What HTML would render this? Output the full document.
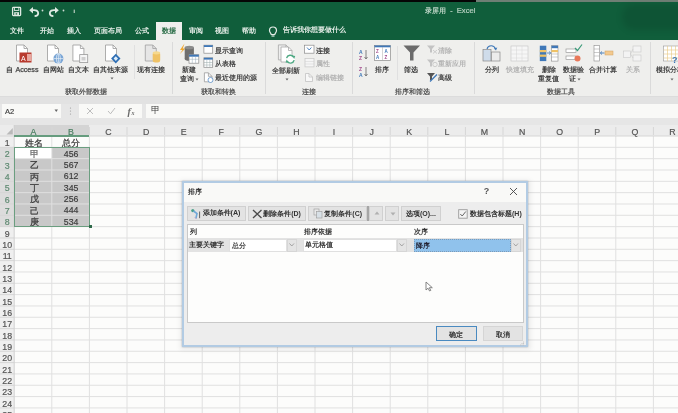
<!DOCTYPE html><html><head><meta charset="utf-8"><style>
*{margin:0;padding:0;box-sizing:border-box}
html,body{width:678px;height:413px;overflow:hidden;background:#fcfcfb;font-family:"Liberation Sans",sans-serif;color:#333;position:relative}
.a{position:absolute}
.t{position:absolute;white-space:nowrap;line-height:1;font-weight:bold}
svg{position:absolute;overflow:visible}
</style></head><body><div id="root" style="position:absolute;left:0;top:0;width:678px;height:413px;will-change:transform"><div class="a" style="left:0px;top:0px;width:475.5px;height:1.5px;background:#050505"></div>
<div class="a" style="left:475.5px;top:0px;width:202.5px;height:1.5px;background:#6f7f75"></div>
<div class="a" style="left:0px;top:2px;width:678px;height:38px;background:#105e3b"></div>
<div class="a" style="left:622px;top:4px;width:70px;height:26px;background:rgba(0,0,0,0.10);border-radius:12px;filter:blur(3px)"></div>
<div class="a" style="left:0px;top:1.5px;width:678px;height:38.5px;background:transparent"></div>
<svg style="left:11px;top:6px" width="11" height="11" viewBox="0 0 11 11"><rect x="1.6" y="1.4" width="8" height="8.2" rx="0.8" fill="none" stroke="#dfeae3" stroke-width="1.3"/><rect x="3.4" y="1.4" width="4.4" height="3" fill="none" stroke="#dfeae3" stroke-width="0.9"/><rect x="3.2" y="6.2" width="4.8" height="3.4" fill="#dfeae3"/><rect x="4.6" y="7.2" width="1.6" height="1.4" fill="#2b6e48"/></svg>
<svg style="left:28px;top:6px" width="12" height="11" viewBox="0 0 12 11"><path d="M1.2 4.2 L5 1 L5 7.4 Z" fill="#dfeae3"/><path d="M4.5 4.2 C8 3.6 10.2 5 10.2 7.2 C10.2 9 8.8 10 6.6 10.2" fill="none" stroke="#dfeae3" stroke-width="1.8"/></svg>
<svg style="left:41px;top:9px" width="3" height="3" viewBox="0 0 3 3"><circle cx="1.5" cy="1.5" r="0.9" fill="#cfdcd4"/></svg>
<svg style="left:48px;top:6px" width="12" height="11" viewBox="0 0 12 11"><path d="M10.8 4.2 L7 1 L7 7.4 Z" fill="#dfeae3"/><path d="M7.5 4.2 C4 3.6 1.8 5 1.8 7.2 C1.8 9 3.2 10 5.4 10.2" fill="none" stroke="#dfeae3" stroke-width="1.8"/></svg>
<svg style="left:62px;top:9px" width="3" height="3" viewBox="0 0 3 3"><circle cx="1.5" cy="1.5" r="0.9" fill="#cfdcd4"/></svg>
<svg style="left:73px;top:9px" width="3" height="5" viewBox="0 0 3 5"><rect x="0.6" y="0.6" width="1.4" height="3.4" fill="#9fbcab"/></svg>
<div class="t" style="left:425px;top:6.8px;font-size:7px;color:#b9d2c3;font-weight:bold;">录屏用</div>
<div class="t" style="left:450.3px;top:6.8px;font-size:7px;color:#b9d2c3;font-weight:normal;-webkit-text-stroke:0.2px #b9d2c3;">-</div>
<div class="t" style="left:456.8px;top:6.5px;font-size:7.6px;color:#b9d2c3;font-weight:normal;-webkit-text-stroke:0.2px #b9d2c3;">Excel</div>
<div class="t" style="left:9.5px;top:27px;font-size:7px;color:#e3ece6;font-weight:bold;">文件</div>
<div class="t" style="left:40.3px;top:27px;font-size:7px;color:#e3ece6;font-weight:bold;">开始</div>
<div class="t" style="left:66.5px;top:27px;font-size:7px;color:#e3ece6;font-weight:bold;">插入</div>
<div class="t" style="left:94.2px;top:27px;font-size:7px;color:#e3ece6;font-weight:bold;">页面布局</div>
<div class="t" style="left:134.8px;top:27px;font-size:7px;color:#e3ece6;font-weight:bold;">公式</div>
<div class="t" style="left:188.8px;top:27px;font-size:7px;color:#e3ece6;font-weight:bold;">审阅</div>
<div class="t" style="left:215px;top:27px;font-size:7px;color:#e3ece6;font-weight:bold;">视图</div>
<div class="t" style="left:241.6px;top:27px;font-size:7px;color:#e3ece6;font-weight:bold;">帮助</div>
<div class="a" style="left:156px;top:22px;width:26px;height:18px;background:#efefed"></div>
<div class="t" style="left:162px;top:27px;font-size:7px;color:#2b6e48;font-weight:bold;">数据</div>
<svg style="left:268px;top:26px" width="10" height="11" viewBox="0 0 10 11"><path d="M5 1 C2.5 1 1.5 3 1.5 4.5 C1.5 6.5 3 7 3.2 8.5 L6.8 8.5 C7 7 8.5 6.5 8.5 4.5 C8.5 3 7.5 1 5 1 Z" fill="none" stroke="#e3ece6" stroke-width="1.2"/><line x1="3.5" y1="10" x2="6.5" y2="10" stroke="#e3ece6" stroke-width="1.2"/></svg>
<div class="t" style="left:283.4px;top:27px;font-size:7.12px;color:#e3ece6;font-weight:bold;">告诉我你想要做什么</div>
<div class="a" style="left:0px;top:40px;width:678px;height:57px;background:#efefed"></div>
<div class="a" style="left:0px;top:96px;width:678px;height:1px;background:#dcdcdc"></div>
<div class="a" style="left:171.5px;top:42px;width:1px;height:52px;background:#dadada"></div>
<div class="a" style="left:265.3px;top:42px;width:1px;height:52px;background:#dadada"></div>
<div class="a" style="left:351.6px;top:42px;width:1px;height:52px;background:#dadada"></div>
<div class="a" style="left:473.6px;top:42px;width:1px;height:52px;background:#dadada"></div>
<div class="a" style="left:649.6px;top:42px;width:1px;height:52px;background:#dadada"></div>
<div class="a" style="left:133.5px;top:45px;width:1px;height:34px;background:#e0e0e0"></div>
<div class="a" style="left:397px;top:46px;width:1px;height:34px;background:#e0e0e0"></div>
<div class="t" style="left:64.5px;top:88px;font-size:7px;color:#555;font-weight:bold;">获取外部数据</div>
<div class="t" style="left:200.9px;top:88px;font-size:7px;color:#555;font-weight:bold;">获取和转换</div>
<div class="t" style="left:301.5px;top:88px;font-size:7px;color:#555;font-weight:bold;">连接</div>
<div class="t" style="left:395.2px;top:88px;font-size:7px;color:#555;font-weight:bold;">排序和筛选</div>
<div class="t" style="left:547.1px;top:88px;font-size:7px;color:#555;font-weight:bold;">数据工具</div>
<svg style="left:0px;top:40px" width="678" height="57" viewBox="0 0 678 57"><path d="M16.5 5.0 L24 5.0 L27.5 8.5 L27.5 21.0 L16.5 21.0 Z" fill="#ffffff" stroke="#9a9a9a" stroke-width="0.8"/><path d="M24 5.0 L24 8.5 L27.5 8.5" fill="none" stroke="#9a9a9a" stroke-width="0.8"/><rect x="19.5" y="12.5" width="12" height="10" fill="#b83a2e"/><rect x="27" y="14" width="4.5" height="7" fill="#e7a79f"/><text x="21" y="20.5" font-size="7" fill="#fff" font-family="Liberation Sans">A</text><path d="M47.5 5.0 L55 5.0 L58.5 8.5 L58.5 21.0 L47.5 21.0 Z" fill="#ffffff" stroke="#9a9a9a" stroke-width="0.8"/><path d="M55 5.0 L55 8.5 L58.5 8.5" fill="none" stroke="#9a9a9a" stroke-width="0.8"/><circle cx="58.4" cy="18.6" r="5" fill="#7aa6d6"/><path d="M58.4 13.6 V23.6 M53.4 18.6 H63.4" stroke="#e9f0f8" stroke-width="0.7"/><ellipse cx="58.4" cy="18.6" rx="2" ry="5" fill="none" stroke="#e9f0f8" stroke-width="0.7"/><path d="M72.9 5.0 L80.4 5.0 L83.9 8.5 L83.9 21.0 L72.9 21.0 Z" fill="#ffffff" stroke="#9a9a9a" stroke-width="0.8"/><path d="M80.4 5.0 L80.4 8.5 L83.9 8.5" fill="none" stroke="#9a9a9a" stroke-width="0.8"/><rect x="79.7" y="14.6" width="8" height="8" fill="#f6f6f6" stroke="#9a9a9a" stroke-width="0.8"/><rect x="81.5" y="17" width="4" height="3.5" fill="#cfcfcf"/><path d="M105.5 5.0 L113 5.0 L116.5 8.5 L116.5 21.0 L105.5 21.0 Z" fill="#ffffff" stroke="#9a9a9a" stroke-width="0.8"/><path d="M113 5.0 L113 8.5 L116.5 8.5" fill="none" stroke="#9a9a9a" stroke-width="0.8"/><path d="M115.8 13.8 L120.5 18.6 L115.8 23.4 L111.1 18.6 Z" fill="#2f6fb5"/><path d="M115.8 16.3 L118 18.6 L115.8 20.9 L113.6 18.6 Z" fill="#dfeefa"/><path d="M145.3 5.0 L152.8 5.0 L156.3 8.5 L156.3 21.0 L145.3 21.0 Z" fill="#e6e6e6" stroke="#9f9f9f" stroke-width="0.8"/><path d="M152.8 5.0 L152.8 8.5 L156.3 8.5" fill="none" stroke="#9f9f9f" stroke-width="0.8"/><rect x="152.7" y="12" width="7.5" height="10.5" rx="2.5" fill="#efc266"/><ellipse cx="156.45" cy="12.8" rx="3.75" ry="1.6" fill="#f6d98f"/></svg>
<div class="t" style="left:6.4px;top:65.8px;font-size:7.2px;color:#444;font-weight:bold;">自 <span style="font-weight:normal;-webkit-text-stroke:0.25px #444">Access</span></div>
<div class="t" style="left:42.8px;top:65.8px;font-size:7px;color:#444;font-weight:bold;">自网站</div>
<div class="t" style="left:68px;top:65.8px;font-size:7px;color:#444;font-weight:bold;">自文本</div>
<div class="t" style="left:93.2px;top:65.8px;font-size:7px;color:#444;font-weight:bold;">自其他来源</div>
<svg style="left:110px;top:77px" width="4" height="3" viewBox="0 0 4 3"><path d="M0.5 0.5 L3.5 0.5 L2 2.5 Z" fill="#666"/></svg>
<div class="t" style="left:136.8px;top:65.8px;font-size:7px;color:#444;font-weight:bold;">现有连接</div>
<svg style="left:0px;top:40px" width="678" height="57" viewBox="0 0 678 57"><path d="M184.5 3.5 L180 10 L182.5 10 L179.8 14 L185.4 8.5 L182.8 8.5 Z" fill="#f0a830"/><rect x="184.7" y="7.5" width="9.2" height="11.5" fill="#6f6f6f"/><ellipse cx="189.3" cy="7.5" rx="4.6" ry="1.8" fill="#8c8c8c"/><ellipse cx="189.3" cy="19" rx="4.6" ry="1.8" fill="#6f6f6f"/><rect x="189" y="14.7" width="9.8" height="8.5" fill="#fff" stroke="#8a8a8a" stroke-width="0.7"/><rect x="189" y="14.7" width="9.8" height="2" fill="#3f78b8"/><path d="M189 19.3 H198.8 M192.3 16.7 V23.2 M195.6 16.7 V23.2" stroke="#9ab" stroke-width="0.5"/><rect x="203.9" y="5.2" width="8.8" height="8" fill="#fff" stroke="#8a8a8a" stroke-width="0.7"/><rect x="203.9" y="5.2" width="8.8" height="1.8" fill="#3f78b8"/><rect x="203.9" y="17.8" width="8.8" height="9.5" fill="#fff" stroke="#8a8a8a" stroke-width="0.7"/><rect x="203.9" y="17.8" width="8.8" height="1.8" fill="#3f78b8"/><path d="M203.9 22.5 H212.7 M203.9 25 H212.7 M206.8 19.6 V27.3 M209.8 19.6 V27.3" stroke="#9aa" stroke-width="0.5"/><path d="M204.4 32.8 L208.4 32.8 L211.9 36.3 L211.9 41.8 L204.4 41.8 Z" fill="#ffffff" stroke="#9a9a9a" stroke-width="0.8"/><path d="M208.4 32.8 L208.4 36.3 L211.9 36.3" fill="none" stroke="#9a9a9a" stroke-width="0.8"/><circle cx="210.5" cy="40" r="2.5" fill="#fff" stroke="#4a86c5" stroke-width="0.7"/></svg>
<div class="t" style="left:182px;top:65.8px;font-size:7px;color:#444;font-weight:bold;">新建</div>
<div class="t" style="left:180px;top:75px;font-size:7px;color:#444;font-weight:bold;">查询</div>
<svg style="left:195px;top:78px" width="4" height="3" viewBox="0 0 4 3"><path d="M0.5 0.5 L3.5 0.5 L2 2.5 Z" fill="#666"/></svg>
<div class="t" style="left:215px;top:46.5px;font-size:7px;color:#444;font-weight:bold;">显示查询</div>
<div class="t" style="left:215px;top:59.5px;font-size:7px;color:#444;font-weight:bold;">从表格</div>
<div class="t" style="left:215px;top:73.5px;font-size:7px;color:#444;font-weight:bold;">最近使用的源</div>
<svg style="left:0px;top:40px" width="678" height="57" viewBox="0 0 678 57"><path d="M278.4 4.9 L285.9 4.9 L289.4 8.4 L289.4 19.9 L278.4 19.9 Z" fill="#eeeeee" stroke="#a8a8a8" stroke-width="0.8"/><path d="M285.9 4.9 L285.9 8.4 L289.4 8.4" fill="none" stroke="#a8a8a8" stroke-width="0.8"/><path d="M281.0 7.0 L288.5 7.0 L292.0 10.5 L292.0 22.0 L281.0 22.0 Z" fill="#fff" stroke="#a8a8a8" stroke-width="0.8"/><path d="M288.5 7.0 L288.5 10.5 L292.0 10.5" fill="none" stroke="#a8a8a8" stroke-width="0.8"/><circle cx="290.4" cy="19.2" r="4.6" fill="#fff"/><path d="M286.6 18.2 A3.8 3.8 0 0 1 293.6 17.2" fill="none" stroke="#4fa883" stroke-width="1.4"/><path d="M294.2 20.2 A3.8 3.8 0 0 1 287.2 21.2" fill="none" stroke="#4fa883" stroke-width="1.4"/><path d="M292 15.6 L295.2 16 L294.2 19 Z" fill="#4fa883"/><path d="M288.8 22.8 L285.6 22.4 L286.6 19.4 Z" fill="#4fa883"/><rect x="304.4" y="5.2" width="9.6" height="8" fill="#fff" stroke="#8a8a8a" stroke-width="0.7"/><path d="M307 7.5 L309.2 10 L311.4 7.5" fill="none" stroke="#3f78b8" stroke-width="0.9"/><rect x="305" y="18.4" width="9" height="8.5" fill="#f5f5f5" stroke="#c6c6c6" stroke-width="0.7"/><path d="M305 21.5 H314 M305 24 H314" stroke="#d0d0d0" stroke-width="0.5"/><path d="M305.5 33.5 L309 33.5 L312.5 37 L312.5 41.5 L305.5 41.5 Z" fill="#f8f8f8" stroke="#c3c3c3" stroke-width="0.8"/><path d="M309 33.5 L309 37 L312.5 37" fill="none" stroke="#c3c3c3" stroke-width="0.8"/></svg>
<div class="t" style="left:272px;top:66.5px;font-size:7px;color:#444;font-weight:bold;">全部刷新</div>
<svg style="left:285px;top:78px" width="4" height="3" viewBox="0 0 4 3"><path d="M0.5 0.5 L3.5 0.5 L2 2.5 Z" fill="#666"/></svg>
<div class="t" style="left:315.5px;top:46.5px;font-size:7px;color:#444;font-weight:bold;">连接</div>
<div class="t" style="left:315.5px;top:60px;font-size:7px;color:#b4b4b4;font-weight:bold;">属性</div>
<div class="t" style="left:315.5px;top:74px;font-size:7px;color:#b4b4b4;font-weight:bold;">编辑链接</div>
<svg style="left:0px;top:40px" width="678" height="57" viewBox="0 0 678 57"><text x="359" y="14" font-size="5" fill="#3f78b8" font-family="Liberation Sans" font-weight="bold">A</text><text x="359" y="19.5" font-size="5" fill="#a0478a" font-family="Liberation Sans" font-weight="bold">Z</text><path d="M366 10 V18.5 M364.5 17 L366 19 L367.5 17" fill="none" stroke="#555" stroke-width="0.7"/><text x="359" y="31" font-size="5" fill="#a0478a" font-family="Liberation Sans" font-weight="bold">Z</text><text x="359" y="36.5" font-size="5" fill="#3f78b8" font-family="Liberation Sans" font-weight="bold">A</text><path d="M366 27 V35.5 M364.5 34 L366 36 L367.5 34" fill="none" stroke="#555" stroke-width="0.7"/><rect x="374.5" y="5.5" width="16" height="15" fill="#fff" stroke="#8a8a8a" stroke-width="0.7"/><rect x="374.5" y="5.5" width="16" height="1.8" fill="#3f78b8"/><line x1="382.5" y1="7" x2="382.5" y2="20.5" stroke="#aaa" stroke-width="0.5"/><text x="376" y="13" font-size="4.5" fill="#a0478a" font-family="Liberation Sans" font-weight="bold">Z</text><text x="376" y="19" font-size="4.5" fill="#3f78b8" font-family="Liberation Sans" font-weight="bold">A</text><text x="384.5" y="13" font-size="4.5" fill="#3f78b8" font-family="Liberation Sans" font-weight="bold">A</text><text x="384.5" y="19" font-size="4.5" fill="#a0478a" font-family="Liberation Sans" font-weight="bold">Z</text><path d="M403.5 5.5 L420 5.5 L413.5 12.5 L413.5 20.5 L410 20.5 L410 12.5 Z" fill="#6b6b6b"/><path d="M427 5.5 L435 5.5 L432 9 L432 12.5 L430 12.5 L430 9 Z" fill="#c3c3c3"/><path d="M433 10 L437 13.5 M437 10 L433 13.5" stroke="#c3c3c3" stroke-width="0.8"/><path d="M427 19.5 L435 19.5 L432 23 L432 26.5 L430 26.5 L430 23 Z" fill="#c3c3c3"/><circle cx="435" cy="24.5" r="2.2" fill="none" stroke="#c3c3c3" stroke-width="0.8"/><path d="M427 33 L435 33 L432 36.5 L432 40 L430 40 L430 36.5 Z" fill="#555"/><path d="M430 41.5 L437 34.5" stroke="#3f78b8" stroke-width="1.3"/></svg>
<div class="t" style="left:374.9px;top:66.2px;font-size:7px;color:#444;font-weight:bold;">排序</div>
<div class="t" style="left:404.4px;top:66.2px;font-size:7px;color:#444;font-weight:bold;">筛选</div>
<div class="t" style="left:437.6px;top:46.5px;font-size:7px;color:#b4b4b4;font-weight:bold;">清除</div>
<div class="t" style="left:437.6px;top:60px;font-size:7px;color:#b4b4b4;font-weight:bold;">重新应用</div>
<div class="t" style="left:437.6px;top:74px;font-size:7px;color:#444;font-weight:bold;">高级</div>
<svg style="left:0px;top:40px" width="678" height="57" viewBox="0 0 678 57"><rect x="483" y="9.5" width="8" height="11.5" fill="#cfdcea" stroke="#8a8a8a" stroke-width="0.7"/><rect x="491.5" y="12" width="8.5" height="9" fill="#ececec" stroke="#8a8a8a" stroke-width="0.7"/><path d="M487 9 C488 5 494 4.5 495.5 9" fill="none" stroke="#3f78b8" stroke-width="1.1"/><path d="M494 8.5 L496 10.5 L497.3 7.5" fill="#3f78b8"/><rect x="511" y="6" width="17" height="15" fill="#f6f6f6" stroke="#cacaca" stroke-width="0.7"/><path d="M511 10 H528 M511 14 H528 M511 18 H528 M516.5 6 V21 M522 6 V21" stroke="#d5d5d5" stroke-width="0.5"/><rect x="539.8" y="5.7" width="6.5" height="15.4" fill="#3f78b8"/><rect x="539.8" y="10" width="6.5" height="2.2" fill="#efc266"/><rect x="539.8" y="14.6" width="6.5" height="2.2" fill="#efc266"/><rect x="551.5" y="5.7" width="6.5" height="15.4" fill="#fff" stroke="#8a8a8a" stroke-width="0.6"/><rect x="551.5" y="5.7" width="6.5" height="2.5" fill="#3f78b8"/><rect x="551.5" y="10" width="6.5" height="2.2" fill="#efc266"/><path d="M551.5 14 H558 M551.5 17 H558" stroke="#999" stroke-width="0.5"/><path d="M547 13 H550.5 M549 11.5 L550.8 13 L549 14.5" stroke="#3f78b8" stroke-width="0.8" fill="none"/><rect x="566" y="9" width="10" height="3.5" fill="#fff" stroke="#8a8a8a" stroke-width="0.6"/><rect x="566" y="16" width="10" height="3.5" fill="#fff" stroke="#8a8a8a" stroke-width="0.6"/><path d="M575 8 L577.5 10.5 L582 4.5" fill="none" stroke="#3c9b7a" stroke-width="1.2"/><circle cx="577.5" cy="18.5" r="3" fill="#e8785a"/><rect x="594" y="5.5" width="5.5" height="15.5" fill="#fff" stroke="#8a8a8a" stroke-width="0.6"/><path d="M594 9 H599.5 M594 12.5 H599.5 M594 16 H599.5" stroke="#999" stroke-width="0.5"/><rect x="605" y="11" width="8" height="4" fill="#f2c98f" stroke="#d0a060" stroke-width="0.5"/><path d="M600.5 13 H604.5 M602 11.5 L600.3 13 L602 14.5" stroke="#3f78b8" stroke-width="0.9" fill="none"/><rect x="623.5" y="11" width="7" height="6.5" fill="#f3f3f3" stroke="#c8c8c8" stroke-width="0.6"/><rect x="633" y="6" width="8" height="6" fill="#f3f3f3" stroke="#c8c8c8" stroke-width="0.6"/><rect x="633" y="15" width="8" height="6" fill="#f3f3f3" stroke="#c8c8c8" stroke-width="0.6"/><path d="M630.5 14 L633 9 M630.5 14 L633 18" stroke="#c8c8c8" stroke-width="0.6"/><rect x="663.5" y="6" width="15" height="15" fill="#fff" stroke="#999" stroke-width="0.6"/><path d="M663.5 10 H678 M663.5 14 H678 M663.5 18 H678 M667.5 6 V21 M671.5 6 V21 M675.5 6 V21" stroke="#e7c77f" stroke-width="0.6"/><text x="672" y="23" font-size="9" fill="#3f78b8" font-family="Liberation Sans" font-weight="bold">?</text></svg>
<div class="t" style="left:484.6px;top:66px;font-size:7px;color:#444;font-weight:bold;">分列</div>
<div class="t" style="left:505.7px;top:66px;font-size:7px;color:#b4b4b4;font-weight:bold;">快速填充</div>
<div class="t" style="left:542.2px;top:66px;font-size:7px;color:#444;font-weight:bold;">删除</div>
<div class="t" style="left:538.2px;top:75px;font-size:7px;color:#444;font-weight:bold;">重复值</div>
<div class="t" style="left:563.3px;top:66px;font-size:7px;color:#444;font-weight:bold;">数据验</div>
<div class="t" style="left:569px;top:75px;font-size:7px;color:#444;font-weight:bold;">证</div>
<svg style="left:577px;top:78px" width="4" height="3" viewBox="0 0 4 3"><path d="M0.5 0.5 L3.5 0.5 L2 2.5 Z" fill="#666"/></svg>
<div class="t" style="left:589.1px;top:66px;font-size:7px;color:#444;font-weight:bold;">合并计算</div>
<div class="t" style="left:625.7px;top:66px;font-size:7px;color:#b4b4b4;font-weight:bold;">关系</div>
<div class="t" style="left:656px;top:66px;font-size:7px;color:#444;font-weight:bold;">模拟分析</div>
<svg style="left:669.5px;top:78px" width="4" height="3" viewBox="0 0 4 3"><path d="M0.5 0.5 L3.5 0.5 L2 2.5 Z" fill="#666"/></svg>
<div class="a" style="left:0px;top:97px;width:678px;height:28px;background:#e6e6e6"></div>
<div class="a" style="left:0px;top:97px;width:678px;height:7px;background:#e2e2e2"></div>
<div class="a" style="left:2px;top:104px;width:59px;height:14px;background:#f9f9f7"></div>
<div class="t" style="left:5px;top:107.5px;font-size:7.5px;color:#444;font-weight:normal;-webkit-text-stroke:0.2px #444;">A2</div>
<svg style="left:54px;top:109px" width="5" height="4" viewBox="0 0 5 4"><path d="M0.5 0.5 L4 0.5 L2.25 3 Z" fill="#666"/></svg>
<svg style="left:69px;top:105px" width="3" height="12" viewBox="0 0 3 12"><circle cx="1.5" cy="3" r="0.6" fill="#999"/><circle cx="1.5" cy="6" r="0.6" fill="#999"/><circle cx="1.5" cy="9" r="0.6" fill="#999"/></svg>
<div class="a" style="left:79px;top:104px;width:63px;height:14px;background:#f9f9f7"></div>
<svg style="left:86px;top:107px" width="8" height="8" viewBox="0 0 8 8"><path d="M1 1 L7 7 M7 1 L1 7" stroke="#b5b5b5" stroke-width="0.9"/></svg>
<svg style="left:107px;top:107px" width="9" height="8" viewBox="0 0 9 8"><path d="M1 4 L3.5 6.8 L8 1" fill="none" stroke="#b5b5b5" stroke-width="0.9"/></svg>
<svg style="left:126px;top:105px" width="12" height="12" viewBox="0 0 12 12"><text x="1.5" y="9.5" font-size="10" font-style="italic" font-weight="bold" fill="#6a6a6a" font-family="Liberation Serif">f</text><text x="5.6" y="10" font-size="6" font-style="italic" font-weight="bold" fill="#6a6a6a" font-family="Liberation Serif">x</text></svg>
<div class="a" style="left:145.5px;top:104px;width:533px;height:14px;background:#f9f9f7"></div>
<div class="t" style="left:151.3px;top:106.2px;font-size:8.6px;color:#3a3a3a;font-weight:bold;font-weight:normal">甲</div>
<div class="a" style="left:0px;top:125px;width:678px;height:288px;background:#fcfcfb"></div>
<div class="a" style="left:0px;top:124.5px;width:678px;height:11.5px;background:#ececec"></div>
<div class="a" style="left:0px;top:136px;width:14.2px;height:277px;background:#efefef"></div>
<div class="a" style="left:14.2px;top:125px;width:75.2px;height:11px;background:#d4d4d4"></div>
<div class="a" style="left:0px;top:147.3px;width:14.2px;height:79.3px;background:#dcdcdc"></div>
<div class="a" style="left:14.2px;top:147.3px;width:75.2px;height:79.3px;background:#c8c8c8"></div>
<div class="a" style="left:14.2px;top:147.3px;width:37.6px;height:11.33px;background:#ffffff"></div>
<svg style="left:0px;top:0px" width="678" height="413" viewBox="0 0 678 413"><line x1="51.80" y1="136" x2="51.80" y2="413" stroke="#e0e0e0" stroke-width="1"/><line x1="51.80" y1="127" x2="51.80" y2="135" stroke="#d6d6d6" stroke-width="1"/><line x1="89.40" y1="136" x2="89.40" y2="413" stroke="#e0e0e0" stroke-width="1"/><line x1="89.40" y1="127" x2="89.40" y2="135" stroke="#d6d6d6" stroke-width="1"/><line x1="127.00" y1="136" x2="127.00" y2="413" stroke="#e0e0e0" stroke-width="1"/><line x1="127.00" y1="127" x2="127.00" y2="135" stroke="#d6d6d6" stroke-width="1"/><line x1="164.60" y1="136" x2="164.60" y2="413" stroke="#e0e0e0" stroke-width="1"/><line x1="164.60" y1="127" x2="164.60" y2="135" stroke="#d6d6d6" stroke-width="1"/><line x1="202.20" y1="136" x2="202.20" y2="413" stroke="#e0e0e0" stroke-width="1"/><line x1="202.20" y1="127" x2="202.20" y2="135" stroke="#d6d6d6" stroke-width="1"/><line x1="239.80" y1="136" x2="239.80" y2="413" stroke="#e0e0e0" stroke-width="1"/><line x1="239.80" y1="127" x2="239.80" y2="135" stroke="#d6d6d6" stroke-width="1"/><line x1="277.40" y1="136" x2="277.40" y2="413" stroke="#e0e0e0" stroke-width="1"/><line x1="277.40" y1="127" x2="277.40" y2="135" stroke="#d6d6d6" stroke-width="1"/><line x1="315.00" y1="136" x2="315.00" y2="413" stroke="#e0e0e0" stroke-width="1"/><line x1="315.00" y1="127" x2="315.00" y2="135" stroke="#d6d6d6" stroke-width="1"/><line x1="352.60" y1="136" x2="352.60" y2="413" stroke="#e0e0e0" stroke-width="1"/><line x1="352.60" y1="127" x2="352.60" y2="135" stroke="#d6d6d6" stroke-width="1"/><line x1="390.20" y1="136" x2="390.20" y2="413" stroke="#e0e0e0" stroke-width="1"/><line x1="390.20" y1="127" x2="390.20" y2="135" stroke="#d6d6d6" stroke-width="1"/><line x1="427.80" y1="136" x2="427.80" y2="413" stroke="#e0e0e0" stroke-width="1"/><line x1="427.80" y1="127" x2="427.80" y2="135" stroke="#d6d6d6" stroke-width="1"/><line x1="465.40" y1="136" x2="465.40" y2="413" stroke="#e0e0e0" stroke-width="1"/><line x1="465.40" y1="127" x2="465.40" y2="135" stroke="#d6d6d6" stroke-width="1"/><line x1="503.00" y1="136" x2="503.00" y2="413" stroke="#e0e0e0" stroke-width="1"/><line x1="503.00" y1="127" x2="503.00" y2="135" stroke="#d6d6d6" stroke-width="1"/><line x1="540.60" y1="136" x2="540.60" y2="413" stroke="#e0e0e0" stroke-width="1"/><line x1="540.60" y1="127" x2="540.60" y2="135" stroke="#d6d6d6" stroke-width="1"/><line x1="578.20" y1="136" x2="578.20" y2="413" stroke="#e0e0e0" stroke-width="1"/><line x1="578.20" y1="127" x2="578.20" y2="135" stroke="#d6d6d6" stroke-width="1"/><line x1="615.80" y1="136" x2="615.80" y2="413" stroke="#e0e0e0" stroke-width="1"/><line x1="615.80" y1="127" x2="615.80" y2="135" stroke="#d6d6d6" stroke-width="1"/><line x1="653.40" y1="136" x2="653.40" y2="413" stroke="#e0e0e0" stroke-width="1"/><line x1="653.40" y1="127" x2="653.40" y2="135" stroke="#d6d6d6" stroke-width="1"/><line x1="691.00" y1="136" x2="691.00" y2="413" stroke="#e0e0e0" stroke-width="1"/><line x1="691.00" y1="127" x2="691.00" y2="135" stroke="#d6d6d6" stroke-width="1"/><line x1="14.2" y1="147.33" x2="678" y2="147.33" stroke="#e0e0e0" stroke-width="1"/><line x1="0" y1="147.33" x2="14.2" y2="147.33" stroke="#d6d6d6" stroke-width="1"/><line x1="14.2" y1="158.66" x2="678" y2="158.66" stroke="#e0e0e0" stroke-width="1"/><line x1="0" y1="158.66" x2="14.2" y2="158.66" stroke="#d6d6d6" stroke-width="1"/><line x1="14.2" y1="169.99" x2="678" y2="169.99" stroke="#e0e0e0" stroke-width="1"/><line x1="0" y1="169.99" x2="14.2" y2="169.99" stroke="#d6d6d6" stroke-width="1"/><line x1="14.2" y1="181.32" x2="678" y2="181.32" stroke="#e0e0e0" stroke-width="1"/><line x1="0" y1="181.32" x2="14.2" y2="181.32" stroke="#d6d6d6" stroke-width="1"/><line x1="14.2" y1="192.65" x2="678" y2="192.65" stroke="#e0e0e0" stroke-width="1"/><line x1="0" y1="192.65" x2="14.2" y2="192.65" stroke="#d6d6d6" stroke-width="1"/><line x1="14.2" y1="203.98" x2="678" y2="203.98" stroke="#e0e0e0" stroke-width="1"/><line x1="0" y1="203.98" x2="14.2" y2="203.98" stroke="#d6d6d6" stroke-width="1"/><line x1="14.2" y1="215.31" x2="678" y2="215.31" stroke="#e0e0e0" stroke-width="1"/><line x1="0" y1="215.31" x2="14.2" y2="215.31" stroke="#d6d6d6" stroke-width="1"/><line x1="14.2" y1="226.64" x2="678" y2="226.64" stroke="#e0e0e0" stroke-width="1"/><line x1="0" y1="226.64" x2="14.2" y2="226.64" stroke="#d6d6d6" stroke-width="1"/><line x1="14.2" y1="237.97" x2="678" y2="237.97" stroke="#e0e0e0" stroke-width="1"/><line x1="0" y1="237.97" x2="14.2" y2="237.97" stroke="#d6d6d6" stroke-width="1"/><line x1="14.2" y1="249.30" x2="678" y2="249.30" stroke="#e0e0e0" stroke-width="1"/><line x1="0" y1="249.30" x2="14.2" y2="249.30" stroke="#d6d6d6" stroke-width="1"/><line x1="14.2" y1="260.63" x2="678" y2="260.63" stroke="#e0e0e0" stroke-width="1"/><line x1="0" y1="260.63" x2="14.2" y2="260.63" stroke="#d6d6d6" stroke-width="1"/><line x1="14.2" y1="271.96" x2="678" y2="271.96" stroke="#e0e0e0" stroke-width="1"/><line x1="0" y1="271.96" x2="14.2" y2="271.96" stroke="#d6d6d6" stroke-width="1"/><line x1="14.2" y1="283.29" x2="678" y2="283.29" stroke="#e0e0e0" stroke-width="1"/><line x1="0" y1="283.29" x2="14.2" y2="283.29" stroke="#d6d6d6" stroke-width="1"/><line x1="14.2" y1="294.62" x2="678" y2="294.62" stroke="#e0e0e0" stroke-width="1"/><line x1="0" y1="294.62" x2="14.2" y2="294.62" stroke="#d6d6d6" stroke-width="1"/><line x1="14.2" y1="305.95" x2="678" y2="305.95" stroke="#e0e0e0" stroke-width="1"/><line x1="0" y1="305.95" x2="14.2" y2="305.95" stroke="#d6d6d6" stroke-width="1"/><line x1="14.2" y1="317.28" x2="678" y2="317.28" stroke="#e0e0e0" stroke-width="1"/><line x1="0" y1="317.28" x2="14.2" y2="317.28" stroke="#d6d6d6" stroke-width="1"/><line x1="14.2" y1="328.61" x2="678" y2="328.61" stroke="#e0e0e0" stroke-width="1"/><line x1="0" y1="328.61" x2="14.2" y2="328.61" stroke="#d6d6d6" stroke-width="1"/><line x1="14.2" y1="339.94" x2="678" y2="339.94" stroke="#e0e0e0" stroke-width="1"/><line x1="0" y1="339.94" x2="14.2" y2="339.94" stroke="#d6d6d6" stroke-width="1"/><line x1="14.2" y1="351.27" x2="678" y2="351.27" stroke="#e0e0e0" stroke-width="1"/><line x1="0" y1="351.27" x2="14.2" y2="351.27" stroke="#d6d6d6" stroke-width="1"/><line x1="14.2" y1="362.60" x2="678" y2="362.60" stroke="#e0e0e0" stroke-width="1"/><line x1="0" y1="362.60" x2="14.2" y2="362.60" stroke="#d6d6d6" stroke-width="1"/><line x1="14.2" y1="373.93" x2="678" y2="373.93" stroke="#e0e0e0" stroke-width="1"/><line x1="0" y1="373.93" x2="14.2" y2="373.93" stroke="#d6d6d6" stroke-width="1"/><line x1="14.2" y1="385.26" x2="678" y2="385.26" stroke="#e0e0e0" stroke-width="1"/><line x1="0" y1="385.26" x2="14.2" y2="385.26" stroke="#d6d6d6" stroke-width="1"/><line x1="14.2" y1="396.59" x2="678" y2="396.59" stroke="#e0e0e0" stroke-width="1"/><line x1="0" y1="396.59" x2="14.2" y2="396.59" stroke="#d6d6d6" stroke-width="1"/><line x1="14.2" y1="407.92" x2="678" y2="407.92" stroke="#e0e0e0" stroke-width="1"/><line x1="0" y1="407.92" x2="14.2" y2="407.92" stroke="#d6d6d6" stroke-width="1"/><line x1="14.2" y1="419.25" x2="678" y2="419.25" stroke="#e0e0e0" stroke-width="1"/><line x1="0" y1="419.25" x2="14.2" y2="419.25" stroke="#d6d6d6" stroke-width="1"/><line x1="14.2" y1="125" x2="14.2" y2="413" stroke="#cfcfcf" stroke-width="1"/><line x1="89.4" y1="136" x2="678" y2="136" stroke="#d6d6d6" stroke-width="1"/><line x1="0" y1="136" x2="14.2" y2="136" stroke="#d6d6d6" stroke-width="1"/></svg>
<svg style="left:0px;top:125px" width="14" height="11" viewBox="0 0 14 11"><path d="M12.8 3 L12.8 9.5 L6.5 9.5 Z" fill="#b9b9b9"/></svg>
<div class="t" style="left:-66.7px;width:200px;text-align:center;top:127.9px;font-size:8.8px;color:#4a7f61;font-weight:normal;-webkit-text-stroke:0.2px #4a7f61;">A</div>
<div class="t" style="left:-29.10000000000001px;width:200px;text-align:center;top:127.9px;font-size:8.8px;color:#4a7f61;font-weight:normal;-webkit-text-stroke:0.2px #4a7f61;">B</div>
<div class="t" style="left:8.5px;width:200px;text-align:center;top:127.9px;font-size:8.8px;color:#555;font-weight:normal;-webkit-text-stroke:0.2px #555;">C</div>
<div class="t" style="left:46.10000000000002px;width:200px;text-align:center;top:127.9px;font-size:8.8px;color:#555;font-weight:normal;-webkit-text-stroke:0.2px #555;">D</div>
<div class="t" style="left:83.70000000000002px;width:200px;text-align:center;top:127.9px;font-size:8.8px;color:#555;font-weight:normal;-webkit-text-stroke:0.2px #555;">E</div>
<div class="t" style="left:121.30000000000001px;width:200px;text-align:center;top:127.9px;font-size:8.8px;color:#555;font-weight:normal;-webkit-text-stroke:0.2px #555;">F</div>
<div class="t" style="left:158.90000000000003px;width:200px;text-align:center;top:127.9px;font-size:8.8px;color:#555;font-weight:normal;-webkit-text-stroke:0.2px #555;">G</div>
<div class="t" style="left:196.5px;width:200px;text-align:center;top:127.9px;font-size:8.8px;color:#555;font-weight:normal;-webkit-text-stroke:0.2px #555;">H</div>
<div class="t" style="left:234.10000000000002px;width:200px;text-align:center;top:127.9px;font-size:8.8px;color:#555;font-weight:normal;-webkit-text-stroke:0.2px #555;">I</div>
<div class="t" style="left:271.70000000000005px;width:200px;text-align:center;top:127.9px;font-size:8.8px;color:#555;font-weight:normal;-webkit-text-stroke:0.2px #555;">J</div>
<div class="t" style="left:309.3px;width:200px;text-align:center;top:127.9px;font-size:8.8px;color:#555;font-weight:normal;-webkit-text-stroke:0.2px #555;">K</div>
<div class="t" style="left:346.90000000000003px;width:200px;text-align:center;top:127.9px;font-size:8.8px;color:#555;font-weight:normal;-webkit-text-stroke:0.2px #555;">L</div>
<div class="t" style="left:384.50000000000006px;width:200px;text-align:center;top:127.9px;font-size:8.8px;color:#555;font-weight:normal;-webkit-text-stroke:0.2px #555;">M</div>
<div class="t" style="left:422.0999999999999px;width:200px;text-align:center;top:127.9px;font-size:8.8px;color:#555;font-weight:normal;-webkit-text-stroke:0.2px #555;">N</div>
<div class="t" style="left:459.69999999999993px;width:200px;text-align:center;top:127.9px;font-size:8.8px;color:#555;font-weight:normal;-webkit-text-stroke:0.2px #555;">O</div>
<div class="t" style="left:497.29999999999995px;width:200px;text-align:center;top:127.9px;font-size:8.8px;color:#555;font-weight:normal;-webkit-text-stroke:0.2px #555;">P</div>
<div class="t" style="left:534.9px;width:200px;text-align:center;top:127.9px;font-size:8.8px;color:#555;font-weight:normal;-webkit-text-stroke:0.2px #555;">Q</div>
<div class="t" style="left:572.5px;width:200px;text-align:center;top:127.9px;font-size:8.8px;color:#555;font-weight:normal;-webkit-text-stroke:0.2px #555;">R</div>
<div class="a" style="left:14.2px;top:135px;width:75.2px;height:1.5px;background:#669c7e"></div>
<div class="t" style="left:-92.8px;width:200px;text-align:center;top:139.0px;font-size:8.8px;color:#555;font-weight:normal;-webkit-text-stroke:0.2px #555;">1</div>
<div class="t" style="left:-92.8px;width:200px;text-align:center;top:150.33px;font-size:8.8px;color:#5f8a72;font-weight:normal;-webkit-text-stroke:0.2px #5f8a72;">2</div>
<div class="t" style="left:-92.8px;width:200px;text-align:center;top:161.66px;font-size:8.8px;color:#5f8a72;font-weight:normal;-webkit-text-stroke:0.2px #5f8a72;">3</div>
<div class="t" style="left:-92.8px;width:200px;text-align:center;top:172.99px;font-size:8.8px;color:#5f8a72;font-weight:normal;-webkit-text-stroke:0.2px #5f8a72;">4</div>
<div class="t" style="left:-92.8px;width:200px;text-align:center;top:184.32px;font-size:8.8px;color:#5f8a72;font-weight:normal;-webkit-text-stroke:0.2px #5f8a72;">5</div>
<div class="t" style="left:-92.8px;width:200px;text-align:center;top:195.65px;font-size:8.8px;color:#5f8a72;font-weight:normal;-webkit-text-stroke:0.2px #5f8a72;">6</div>
<div class="t" style="left:-92.8px;width:200px;text-align:center;top:206.98000000000002px;font-size:8.8px;color:#5f8a72;font-weight:normal;-webkit-text-stroke:0.2px #5f8a72;">7</div>
<div class="t" style="left:-92.8px;width:200px;text-align:center;top:218.31px;font-size:8.8px;color:#5f8a72;font-weight:normal;-webkit-text-stroke:0.2px #5f8a72;">8</div>
<div class="t" style="left:-92.8px;width:200px;text-align:center;top:229.64px;font-size:8.8px;color:#555;font-weight:normal;-webkit-text-stroke:0.2px #555;">9</div>
<div class="t" style="left:-92.8px;width:200px;text-align:center;top:240.97px;font-size:8.8px;color:#555;font-weight:normal;-webkit-text-stroke:0.2px #555;">10</div>
<div class="t" style="left:-92.8px;width:200px;text-align:center;top:252.3px;font-size:8.8px;color:#555;font-weight:normal;-webkit-text-stroke:0.2px #555;">11</div>
<div class="t" style="left:-92.8px;width:200px;text-align:center;top:263.63px;font-size:8.8px;color:#555;font-weight:normal;-webkit-text-stroke:0.2px #555;">12</div>
<div class="t" style="left:-92.8px;width:200px;text-align:center;top:274.96000000000004px;font-size:8.8px;color:#555;font-weight:normal;-webkit-text-stroke:0.2px #555;">13</div>
<div class="t" style="left:-92.8px;width:200px;text-align:center;top:286.28999999999996px;font-size:8.8px;color:#555;font-weight:normal;-webkit-text-stroke:0.2px #555;">14</div>
<div class="t" style="left:-92.8px;width:200px;text-align:center;top:297.62px;font-size:8.8px;color:#555;font-weight:normal;-webkit-text-stroke:0.2px #555;">15</div>
<div class="t" style="left:-92.8px;width:200px;text-align:center;top:308.95px;font-size:8.8px;color:#555;font-weight:normal;-webkit-text-stroke:0.2px #555;">16</div>
<div class="t" style="left:-92.8px;width:200px;text-align:center;top:320.28px;font-size:8.8px;color:#555;font-weight:normal;-webkit-text-stroke:0.2px #555;">17</div>
<div class="t" style="left:-92.8px;width:200px;text-align:center;top:331.61px;font-size:8.8px;color:#555;font-weight:normal;-webkit-text-stroke:0.2px #555;">18</div>
<div class="t" style="left:-92.8px;width:200px;text-align:center;top:342.94px;font-size:8.8px;color:#555;font-weight:normal;-webkit-text-stroke:0.2px #555;">19</div>
<div class="t" style="left:-92.8px;width:200px;text-align:center;top:354.27px;font-size:8.8px;color:#555;font-weight:normal;-webkit-text-stroke:0.2px #555;">20</div>
<div class="t" style="left:-92.8px;width:200px;text-align:center;top:365.6px;font-size:8.8px;color:#555;font-weight:normal;-webkit-text-stroke:0.2px #555;">21</div>
<div class="t" style="left:-92.8px;width:200px;text-align:center;top:376.93px;font-size:8.8px;color:#555;font-weight:normal;-webkit-text-stroke:0.2px #555;">22</div>
<div class="t" style="left:-92.8px;width:200px;text-align:center;top:388.26px;font-size:8.8px;color:#555;font-weight:normal;-webkit-text-stroke:0.2px #555;">23</div>
<div class="t" style="left:-92.8px;width:200px;text-align:center;top:399.59px;font-size:8.8px;color:#555;font-weight:normal;-webkit-text-stroke:0.2px #555;">24</div>
<div class="t" style="left:-92.8px;width:200px;text-align:center;top:410.92px;font-size:8.8px;color:#555;font-weight:normal;-webkit-text-stroke:0.2px #555;">25</div>
<div class="t" style="left:-66.0px;width:200px;text-align:center;top:138.8px;font-size:9px;color:#3a3a3a;font-weight:bold;font-weight:normal;-webkit-text-stroke:0.25px #3a3a3a">姓名</div>
<div class="t" style="left:-28.60000000000001px;width:200px;text-align:center;top:138.8px;font-size:9px;color:#3a3a3a;font-weight:bold;font-weight:normal;-webkit-text-stroke:0.25px #3a3a3a">总分</div>
<div class="t" style="left:-66.0px;width:200px;text-align:center;top:150.13000000000002px;font-size:9px;color:#6a6a6a;font-weight:bold;font-weight:normal;-webkit-text-stroke:0.25px #6a6a6a">甲</div>
<div class="t" style="left:-28.900000000000006px;width:200px;text-align:center;top:149.63000000000002px;font-size:8.8px;color:#3a3a3a;font-weight:normal;-webkit-text-stroke:0.2px #3a3a3a;-webkit-text-stroke:0.15px #3a3a3a">456</div>
<div class="t" style="left:-66.0px;width:200px;text-align:center;top:161.46px;font-size:9px;color:#3a3a3a;font-weight:bold;font-weight:normal;-webkit-text-stroke:0.25px #3a3a3a">乙</div>
<div class="t" style="left:-28.900000000000006px;width:200px;text-align:center;top:160.96px;font-size:8.8px;color:#3a3a3a;font-weight:normal;-webkit-text-stroke:0.2px #3a3a3a;-webkit-text-stroke:0.15px #3a3a3a">567</div>
<div class="t" style="left:-66.0px;width:200px;text-align:center;top:172.79000000000002px;font-size:9px;color:#3a3a3a;font-weight:bold;font-weight:normal;-webkit-text-stroke:0.25px #3a3a3a">丙</div>
<div class="t" style="left:-28.900000000000006px;width:200px;text-align:center;top:172.29000000000002px;font-size:8.8px;color:#3a3a3a;font-weight:normal;-webkit-text-stroke:0.2px #3a3a3a;-webkit-text-stroke:0.15px #3a3a3a">612</div>
<div class="t" style="left:-66.0px;width:200px;text-align:center;top:184.12px;font-size:9px;color:#3a3a3a;font-weight:bold;font-weight:normal;-webkit-text-stroke:0.25px #3a3a3a">丁</div>
<div class="t" style="left:-28.900000000000006px;width:200px;text-align:center;top:183.62px;font-size:8.8px;color:#3a3a3a;font-weight:normal;-webkit-text-stroke:0.2px #3a3a3a;-webkit-text-stroke:0.15px #3a3a3a">345</div>
<div class="t" style="left:-66.0px;width:200px;text-align:center;top:195.45000000000002px;font-size:9px;color:#3a3a3a;font-weight:bold;font-weight:normal;-webkit-text-stroke:0.25px #3a3a3a">戊</div>
<div class="t" style="left:-28.900000000000006px;width:200px;text-align:center;top:194.95000000000002px;font-size:8.8px;color:#3a3a3a;font-weight:normal;-webkit-text-stroke:0.2px #3a3a3a;-webkit-text-stroke:0.15px #3a3a3a">256</div>
<div class="t" style="left:-66.0px;width:200px;text-align:center;top:206.78000000000003px;font-size:9px;color:#3a3a3a;font-weight:bold;font-weight:normal;-webkit-text-stroke:0.25px #3a3a3a">己</div>
<div class="t" style="left:-28.900000000000006px;width:200px;text-align:center;top:206.28000000000003px;font-size:8.8px;color:#3a3a3a;font-weight:normal;-webkit-text-stroke:0.2px #3a3a3a;-webkit-text-stroke:0.15px #3a3a3a">444</div>
<div class="t" style="left:-66.0px;width:200px;text-align:center;top:218.11px;font-size:9px;color:#3a3a3a;font-weight:bold;font-weight:normal;-webkit-text-stroke:0.25px #3a3a3a">庚</div>
<div class="t" style="left:-28.900000000000006px;width:200px;text-align:center;top:217.61px;font-size:8.8px;color:#3a3a3a;font-weight:normal;-webkit-text-stroke:0.2px #3a3a3a;-webkit-text-stroke:0.15px #3a3a3a">534</div>
<div class="a" style="left:14.2px;top:146.8px;width:75.8px;height:80.6px;border:1.5px solid #6b9e80"></div>
<div class="a" style="left:88.8px;top:225.3px;width:3px;height:3px;background:#2e6a4a"></div>
<div class="a" style="left:180px;top:180px;width:351px;height:170px;background:rgba(0,0,0,0.06);filter:blur(2px)"></div>
<div class="a" style="left:182px;top:181px;width:346px;height:166px;background:#ededed;border:2px solid #b2cbe3;box-shadow:0 0 1.5px rgba(60,80,100,0.45)"></div>
<div class="a" style="left:184px;top:183px;width:342px;height:19px;background:#f9f9f7"></div>
<div class="t" style="left:188px;top:188px;font-size:7px;color:#333;font-weight:bold;">排序</div>
<div class="t" style="left:483.8px;top:187.3px;font-size:9px;color:#555;font-weight:normal;-webkit-text-stroke:0.2px #555;font-weight:bold;-webkit-text-stroke:0">?</div>
<svg style="left:509px;top:187px" width="9" height="9" viewBox="0 0 9 9"><path d="M1 1 L8 8 M8 1 L1 8" stroke="#444" stroke-width="0.9"/></svg>
<div class="a" style="left:187px;top:206.3px;width:58.599999999999994px;height:14.699999999999989px;background:#e3e3e3;border:1px solid #d0d0d0"></div>
<div class="a" style="left:247.7px;top:206.3px;width:58.400000000000034px;height:14.699999999999989px;background:#e3e3e3;border:1px solid #d0d0d0"></div>
<div class="a" style="left:308px;top:206.3px;width:58.80000000000001px;height:14.699999999999989px;background:#e3e3e3;border:1px solid #d0d0d0"></div>
<div class="a" style="left:367.3px;top:206px;width:1.5px;height:15px;background:#a5a5a5"></div>
<div class="a" style="left:369.4px;top:206.3px;width:14.0px;height:14.699999999999989px;background:#e3e3e3;border:1px solid #d0d0d0"></div>
<div class="a" style="left:385.3px;top:206.3px;width:13.699999999999989px;height:14.699999999999989px;background:#e3e3e3;border:1px solid #d0d0d0"></div>
<div class="a" style="left:401.3px;top:206.3px;width:39.80000000000001px;height:14.699999999999989px;background:#e3e3e3;border:1px solid #d0d0d0"></div>
<svg style="left:190px;top:208px" width="12" height="12" viewBox="0 0 12 12"><circle cx="2.8" cy="2.6" r="1.6" fill="#4aa08a"/><path d="M3.5 3 L7 5.5 L6 10" fill="none" stroke="#6fa8d8" stroke-width="1.6"/><path d="M5 9.5 L6.5 11" stroke="#a78fc0" stroke-width="1"/><path d="M9.6 3.5 L9.6 10.2" fill="none" stroke="#555" stroke-width="0.9"/></svg>
<div class="t" style="left:202.5px;top:209.7px;font-size:7.15px;color:#333;font-weight:bold;">添加条件(A)</div>
<svg style="left:251.5px;top:208.5px" width="11" height="10" viewBox="0 0 11 10"><path d="M1 1 L9.5 9 M9.5 1 L1 9" stroke="#4a4a4a" stroke-width="1.3"/></svg>
<div class="t" style="left:263.2px;top:209.7px;font-size:7px;color:#333;font-weight:bold;">删除条件(D)</div>
<svg style="left:313px;top:208px" width="10" height="11" viewBox="0 0 10 11"><rect x="1" y="1" width="5" height="6" fill="#e8e8e8" stroke="#999" stroke-width="0.6"/><rect x="3.5" y="3.5" width="5.5" height="6.5" fill="#d8e0e6" stroke="#999" stroke-width="0.6"/></svg>
<div class="t" style="left:324.3px;top:209.7px;font-size:7px;color:#333;font-weight:bold;">复制条件(C)</div>
<svg style="left:373.5px;top:211px" width="6" height="4" viewBox="0 0 6 4"><path d="M0.5 3.5 L3 0.5 L5.5 3.5 Z" fill="#b0b0b0"/></svg>
<svg style="left:389.5px;top:212px" width="6" height="4" viewBox="0 0 6 4"><path d="M0.5 0.5 L3 3.5 L5.5 0.5 Z" fill="#b0b0b0"/></svg>
<div class="t" style="left:406px;top:209.7px;font-size:7px;color:#333;font-weight:bold;">选项(O)...</div>
<svg style="left:457.5px;top:208.5px" width="10" height="10" viewBox="0 0 10 10"><rect x="0.7" y="0.7" width="8.5" height="8.5" fill="#f4f4f4" stroke="#9a9a9a" stroke-width="0.9"/><path d="M2.3 5 L4.2 7 L7.8 2.5" fill="none" stroke="#666" stroke-width="1"/></svg>
<div class="t" style="left:470px;top:209.7px;font-size:7px;color:#333;font-weight:bold;">数据包含标题(H)</div>
<div class="a" style="left:186.5px;top:224.3px;width:337.3px;height:98.5px;background:#fdfdfc;border:1px solid #c9c9c9"></div>
<div class="t" style="left:190px;top:227.5px;font-size:7px;color:#333;font-weight:bold;">列</div>
<div class="t" style="left:304px;top:227.5px;font-size:7px;color:#333;font-weight:bold;">排序依据</div>
<div class="t" style="left:414px;top:227.5px;font-size:7px;color:#333;font-weight:bold;">次序</div>
<div class="a" style="left:187.5px;top:237.5px;width:335.3px;height:14.8px;background:#e3e3e3"></div>
<div class="t" style="left:189px;top:240.7px;font-size:7px;color:#333;font-weight:bold;">主要关键字</div>
<div class="a" style="left:229.4px;top:238.6px;width:58px;height:13.2px;background:#fff;border:1px solid #e0e0e0"></div>
<div class="t" style="left:231.5px;top:241.6px;font-size:7.2px;color:#444;font-weight:bold;font-weight:normal;-webkit-text-stroke:0.2px #444">总分</div>
<div class="a" style="left:287px;top:238.6px;width:10px;height:13.2px;background:#e4e4e4;border:1px solid #d6d6d6"></div>
<svg style="left:289.3px;top:243px" width="6" height="4" viewBox="0 0 6 4"><path d="M0.5 0.5 L2.8 3 L5 0.5" fill="none" stroke="#888" stroke-width="0.7"/></svg>
<div class="a" style="left:303px;top:238.6px;width:94px;height:13.2px;background:#fff;border:1px solid #e0e0e0"></div>
<div class="t" style="left:305px;top:241.6px;font-size:7.1px;color:#3a3a3a;font-weight:bold;">单元格值</div>
<div class="a" style="left:397px;top:238.6px;width:10px;height:13.2px;background:#e4e4e4;border:1px solid #d6d6d6"></div>
<svg style="left:399.3px;top:243px" width="6" height="4" viewBox="0 0 6 4"><path d="M0.5 0.5 L2.8 3 L5 0.5" fill="none" stroke="#888" stroke-width="0.7"/></svg>
<div class="a" style="left:413.6px;top:238.6px;width:97.2px;height:13.2px;background:#90c2ec;border:1px dotted #7d9bb8"></div>
<div class="t" style="left:415.5px;top:241.6px;font-size:7px;color:#223;font-weight:bold;">降序</div>
<div class="a" style="left:511px;top:238.6px;width:10px;height:13.2px;background:#e4e4e4;border:1px solid #d6d6d6"></div>
<svg style="left:513.3px;top:243px" width="6" height="4" viewBox="0 0 6 4"><path d="M0.5 0.5 L2.8 3 L5 0.5" fill="none" stroke="#888" stroke-width="0.7"/></svg>
<svg style="left:425px;top:281px" width="9" height="11" viewBox="0 0 9 11"><path d="M1 1 L1 9 L3 7.2 L4.6 10 L5.8 9.4 L4.3 6.7 L7.3 6.7 Z" fill="#fff" stroke="#777" stroke-width="0.9"/></svg>
<div class="a" style="left:436.2px;top:326.4px;width:40.6px;height:15.1px;background:#e3e3e3;border:1.5px solid #4a8ac0"></div>
<div class="t" style="left:449.2px;top:330.5px;font-size:7px;color:#333;font-weight:bold;">确定</div>
<div class="a" style="left:483px;top:326.4px;width:40.1px;height:15.1px;background:#e3e3e3;border:1px solid #d5d5d5"></div>
<div class="t" style="left:495.5px;top:330.5px;font-size:7px;color:#333;font-weight:bold;">取消</div>
<svg style="left:519px;top:341px" width="6" height="5" viewBox="0 0 6 5"><circle cx="4.5" cy="1" r="0.5" fill="#bbb"/><circle cx="3" cy="2.5" r="0.5" fill="#bbb"/><circle cx="4.5" cy="2.5" r="0.5" fill="#bbb"/><circle cx="1.5" cy="4" r="0.5" fill="#bbb"/><circle cx="3" cy="4" r="0.5" fill="#bbb"/><circle cx="4.5" cy="4" r="0.5" fill="#bbb"/></svg></div></body></html>
